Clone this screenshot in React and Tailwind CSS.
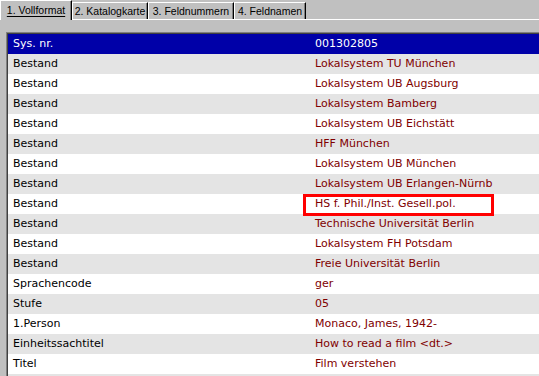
import React from "react";

const tabs = [
  { label: "1. Vollformat", width: "w-[72px]", active: true },
  { label: "2. Katalogkarte", width: "w-[76px]" },
  { label: "3. Feldnummern", width: "w-[86px]" },
  { label: "4. Feldnamen", width: "w-[72px]" },
];

const rows = [
  ["Bestand", "Lokalsystem TU München"],
  ["Bestand", "Lokalsystem UB Augsburg"],
  ["Bestand", "Lokalsystem Bamberg"],
  ["Bestand", "Lokalsystem UB Eichstätt"],
  ["Bestand", "HFF München"],
  ["Bestand", "Lokalsystem UB München"],
  ["Bestand", "Lokalsystem UB Erlangen-Nürnb"],
  ["Bestand", "HS f. Phil./Inst. Gesell.pol.", true],
  ["Bestand", "Technische Universität Berlin"],
  ["Bestand", "Lokalsystem FH Potsdam"],
  ["Bestand", "Freie Universität Berlin"],
  ["Sprachencode", "ger"],
  ["Stufe", "05"],
  ["1.Person", "Monaco, James, 1942-"],
  ["Einheitssachtitel", "How to read a film <dt.>"],
  ["Titel", "Film verstehen"],
  ["", ""],
];

const App = () => {
  return (
    <div className="w-[539px] h-[376px] overflow-hidden bg-[#c0c0c0] font-['DejaVu_Sans',sans-serif] text-[11px]">
      {/* Tabs */}
      <div className="h-[20px] flex items-end border-b border-white">
        {tabs.map((tab) => (
          <div
            key={tab.label}
            className={`${tab.width} ${
              tab.active ? "h-[20px] -mb-px bg-[#c0c0c0]" : "h-[17px]"
            } flex items-center justify-center border-t border-l border-r border-t-white border-l-white border-r-black shadow-[inset_-1px_0_0_#808080] font-['Liberation_Sans',sans-serif] text-[10.5px] text-black leading-none`}
          >
            <span className={tab.active ? "underline underline-offset-2" : ""}>
              {tab.label}
            </span>
          </div>
        ))}
      </div>

      {/* Panel */}
      <div className="ml-[6px] mt-[12px] border-t border-l border-[#808080]">
        <div className="border-t border-l border-[#404040] bg-white">
          <div className="grid grid-cols-[302px_1fr] h-[20px] leading-[20px] bg-[#0000a8] text-white">
            <div className="pl-[5px]">Sys. nr.</div>
            <div className="pl-[5px]">001302805</div>
          </div>
          {rows.map(([label, value, marked], i) => (
            <div
              key={i}
              className={`grid grid-cols-[302px_1fr] h-[20px] leading-[20px] ${
                i % 2 === 0 ? "bg-[#e4e4e4]" : "bg-white"
              }`}
            >
              <div className="pl-[5px] text-black whitespace-nowrap">{label}</div>
              <div className="relative pl-[5px] text-[#800000] whitespace-nowrap">
                {value}
                {marked && (
                  <div className="absolute left-[-7px] top-0 w-[191px] h-[22px] border-[3px] border-[#ff0000]" />
                )}
              </div>
            </div>
          ))}
        </div>
      </div>
    </div>
  );
};

export default App;
